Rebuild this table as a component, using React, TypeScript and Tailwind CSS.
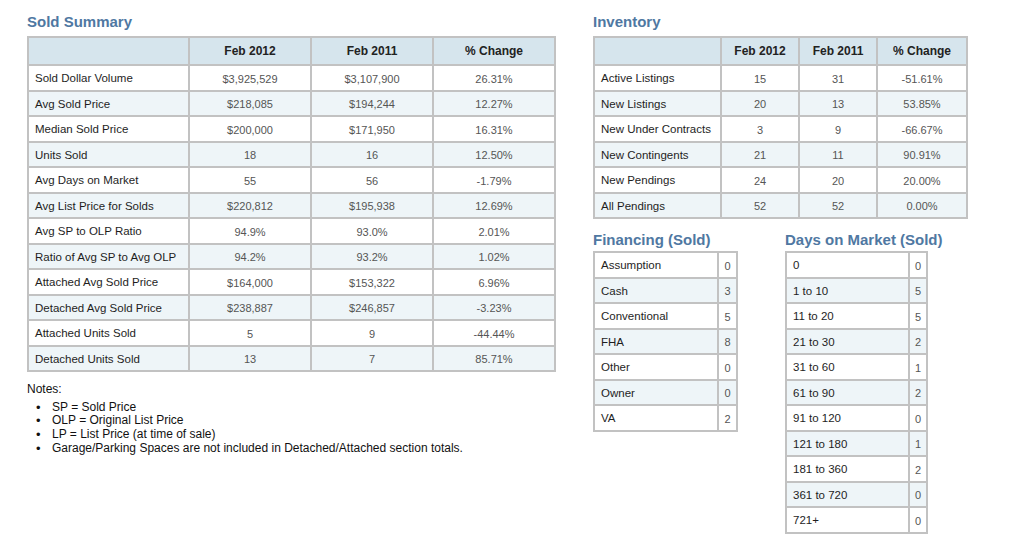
const font = { fontFamily: '"Liberation Sans", Arial, sans-serif' };

type Row = string[];

const soldRows: Row[] = [
  ["Sold Dollar Volume", "$3,925,529", "$3,107,900", "26.31%"],
  ["Avg Sold Price", "$218,085", "$194,244", "12.27%"],
  ["Median Sold Price", "$200,000", "$171,950", "16.31%"],
  ["Units Sold", "18", "16", "12.50%"],
  ["Avg Days on Market", "55", "56", "-1.79%"],
  ["Avg List Price for Solds", "$220,812", "$195,938", "12.69%"],
  ["Avg SP to OLP Ratio", "94.9%", "93.0%", "2.01%"],
  ["Ratio of Avg SP to Avg OLP", "94.2%", "93.2%", "1.02%"],
  ["Attached Avg Sold Price", "$164,000", "$153,322", "6.96%"],
  ["Detached Avg Sold Price", "$238,887", "$246,857", "-3.23%"],
  ["Attached Units Sold", "5", "9", "-44.44%"],
  ["Detached Units Sold", "13", "7", "85.71%"],
];

const inventoryRows: Row[] = [
  ["Active Listings", "15", "31", "-51.61%"],
  ["New Listings", "20", "13", "53.85%"],
  ["New Under Contracts", "3", "9", "-66.67%"],
  ["New Contingents", "21", "11", "90.91%"],
  ["New Pendings", "24", "20", "20.00%"],
  ["All Pendings", "52", "52", "0.00%"],
];

const financingRows: Row[] = [
  ["Assumption", "0"],
  ["Cash", "3"],
  ["Conventional", "5"],
  ["FHA", "8"],
  ["Other", "0"],
  ["Owner", "0"],
  ["VA", "2"],
];

const domRows: Row[] = [
  ["0", "0"],
  ["1 to 10", "5"],
  ["11 to 20", "5"],
  ["21 to 30", "2"],
  ["31 to 60", "1"],
  ["61 to 90", "2"],
  ["91 to 120", "0"],
  ["121 to 180", "1"],
  ["181 to 360", "2"],
  ["361 to 720", "0"],
  ["721+", "0"],
];

const notes = [
  "SP = Sold Price",
  "OLP = Original List Price",
  "LP = List Price (at time of sale)",
  "Garage/Parking Spaces are not included in Detached/Attached section totals.",
];

function Title({ children }: { children: React.ReactNode }) {
  return <h2 className="text-[15px] leading-[18px] font-bold text-[#4f78a2] whitespace-nowrap">{children}</h2>;
}

function DataTable({
  widths,
  rows,
  header,
  width,
}: {
  widths: number[];
  rows: Row[];
  header?: string[];
  width: number;
}) {
  return (
    <table
      className="table-fixed border-separate border-spacing-0 border-l-2 border-t-2 border-[#c2c2c2]"
      style={{ width }}
    >
      <colgroup>
        {widths.map((w, i) => (
          <col key={i} style={{ width: w }} />
        ))}
      </colgroup>
      {header && (
        <thead>
          <tr>
            {header.map((h, i) => (
              <th
                key={i}
                className="h-[28px] border-r-2 border-b-2 border-[#c2c2c2] bg-[#d6e5ed] text-center text-[12px] font-bold text-[#222]"
              >
                {h}
              </th>
            ))}
          </tr>
        </thead>
      )}
      <tbody>
        {rows.map((r, ri) => (
          <tr key={ri} className={ri % 2 === 1 ? "bg-[#eef5f8]" : "bg-white"}>
            {r.map((c, ci) => (
              <td
                key={ci}
                className={
                  ci === 0
                    ? "h-[25.5px] pt-[2px] border-r-2 border-b-2 border-[#c2c2c2] pl-[6px] text-[11.5px] text-[#1e1e1e] whitespace-nowrap overflow-hidden"
                    : "h-[25.5px] pt-[2px] border-r-2 border-b-2 border-[#c2c2c2] text-center text-[11px] text-[#555]"
                }
              >
                {c}
              </td>
            ))}
          </tr>
        ))}
      </tbody>
    </table>
  );
}

export default function App() {
  return (
    <div className="w-[1024px] h-[536px] bg-white overflow-hidden flex pl-[27px] pt-[13px]" style={font}>
      <div className="w-[529px] flex flex-col">
        <Title>Sold Summary</Title>
        <div className="mt-[5px]">
          <DataTable
            width={529}
            widths={[161, 122, 122, 122]}
            header={["", "Feb 2012", "Feb 2011", "% Change"]}
            rows={soldRows}
          />
        </div>
        <div className="mt-[11px] text-[12px] leading-[13.7px] text-[#111]">
          <p>Notes:</p>
          <ul className="mt-[4px]">
            {notes.map((n) => (
              <li key={n} className="flex">
                <span className="w-[25px] pl-[9px] text-[13px]">•</span>
                <span>{n}</span>
              </li>
            ))}
          </ul>
        </div>
      </div>
      <div className="ml-[37px] w-[375px] flex flex-col">
        <Title>Inventory</Title>
        <div className="mt-[5px]">
          <DataTable
            width={375}
            widths={[127, 78, 78, 90]}
            header={["", "Feb 2012", "Feb 2011", "% Change"]}
            rows={inventoryRows}
          />
        </div>
        <div className="mt-[12px] flex">
          <div className="w-[192px] flex flex-col">
            <Title>Financing (Sold)</Title>
            <div className="mt-[2px]">
              <DataTable width={145} widths={[124, 19]} rows={financingRows} />
            </div>
          </div>
          <div className="flex flex-col">
            <Title>Days on Market (Sold)</Title>
            <div className="mt-[2px]">
              <DataTable width={143} widths={[123, 18]} rows={domRows} />
            </div>
          </div>
        </div>
      </div>
    </div>
  );
}
